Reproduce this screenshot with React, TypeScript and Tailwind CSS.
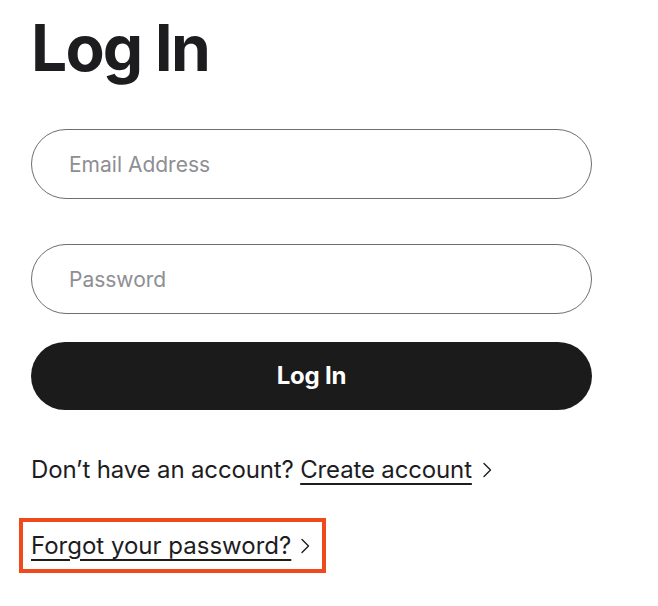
import React from "react";

function Chevron({ className = "" }: { className?: string }) {
  return (
    <svg viewBox="0 0 10 16" className={className} fill="none" stroke="currentColor" strokeWidth="1.4" strokeLinecap="round" strokeLinejoin="round">
      <path d="M2 1.5l6.5 6.5-6.5 6.5" />
    </svg>
  );
}

export default function App() {
  return (
    <div className="min-h-[606px] w-[658px] bg-white text-[#1d1d1f]" style={{ fontFamily: "Inter, 'Liberation Sans', sans-serif" }}>
      <div className="flex flex-col pl-[31px] pt-[16px] w-[592px]">
        <h1 className="text-[64px] leading-[64px] font-bold tracking-[-1.8px] text-[#1d1d1f]">Log In</h1>
        <input
          type="email"
          placeholder="Email Address"
          className="mt-[49px] h-[70px] w-full rounded-full border border-[#6e6e73] bg-white pl-[37px] text-[21px] text-[#1d1d1f] placeholder:text-[#8e8e93] outline-none"
        />
        <input
          type="password"
          placeholder="Password"
          className="mt-[45px] h-[70px] w-full rounded-full border border-[#6e6e73] bg-white pl-[37px] text-[21px] text-[#1d1d1f] placeholder:text-[#8e8e93] outline-none"
        />
        <button className="mt-[28px] h-[68px] w-full rounded-full bg-[#1b1b1b] text-[24px] font-bold text-white tracking-[-0.2px]">
          Log In
        </button>
        <div className="mt-[46px] flex items-center text-[24px] leading-[28px] tracking-[-0.15px] text-[#1d1d1f]">
          <span>Don’t have an account?&nbsp;</span>
          <a href="#" className="underline underline-offset-[5px] decoration-[1.5px]">Create account</a>
          <Chevron className="ml-[10px] h-[16px] w-[10px]" />
        </div>
        <div className="mt-[34px] -ml-[12px] self-start flex items-center border-[4px] border-[#ef4a1e] pl-[8px] pr-[12px] h-[55px] text-[24px] leading-[28px]">
          <a href="#" className="underline underline-offset-[5px] decoration-[1.5px]">Forgot your password?</a>
          <Chevron className="ml-[9px] h-[16px] w-[10px]" />
        </div>
      </div>
    </div>
  );
}
